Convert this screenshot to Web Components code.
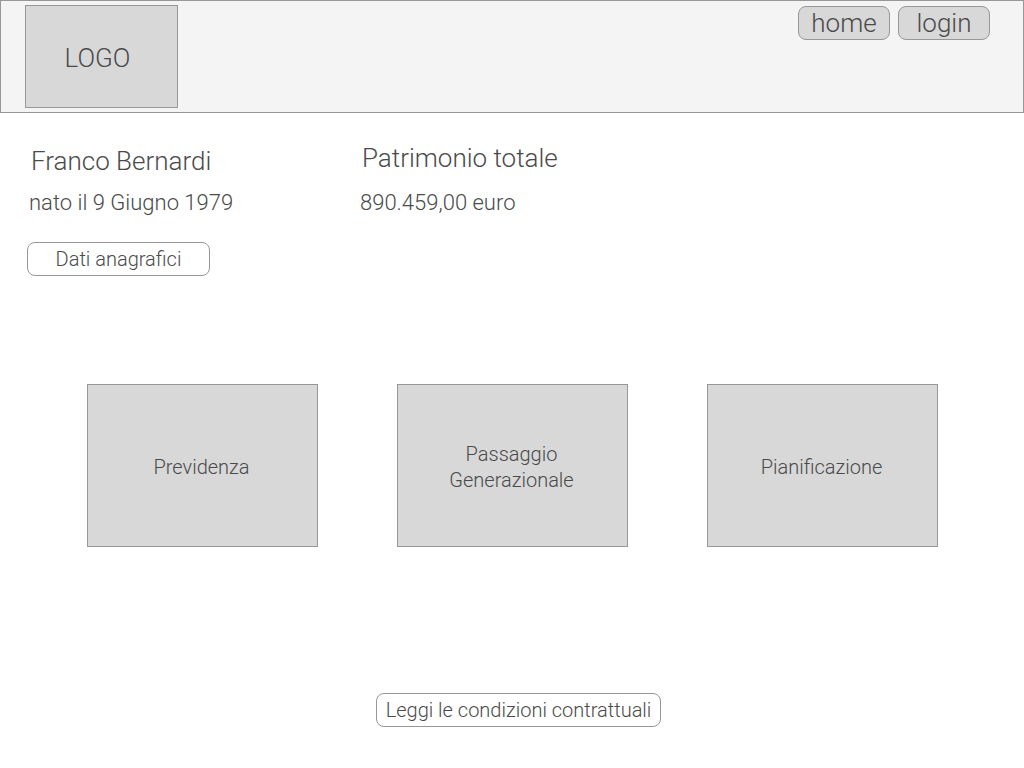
<!DOCTYPE html>
<html lang="it">
<head>
<meta charset="utf-8">
<title>Profilo cliente</title>
<style>
body { margin: 0; background: #fff; color: #4a4a4a; font-family: Roboto, "Liberation Sans", sans-serif; font-weight: 300; }
</style>
</head>
<body>
<client-page></client-page>
<script>
const base = '*, *::before { box-sizing: border-box; } ';

class AppButton extends HTMLElement {
  constructor() {
    super();
    this.attachShadow({ mode: 'open' }).innerHTML = `<style>${base}
      :host { display: block; }
      button { display: block; width: 100%; height: 34px; padding: 0 9px; border: 1px solid #979797; border-radius: 8px; background: #fff; color: inherit; font: inherit; font-size: 20px; line-height: 32px; white-space: nowrap; text-align: center; cursor: pointer; }
      :host([filled]) button { background: #d8d8d8; font-size: 26px; }
      </style><button type="button"><slot></slot></button>`;
  }
}
customElements.define('app-button', AppButton);

class LogoBox extends HTMLElement {
  constructor() {
    super();
    this.attachShadow({ mode: 'open' }).innerHTML = `<style>${base}
      :host { display: flex; box-sizing: border-box; width: 153px; height: 103px; padding: 2px 8px 0 0; align-items: center; justify-content: center; border: 1px solid #979797; background: #d8d8d8; font-size: 26px; line-height: 30px; }
      </style><slot></slot>`;
  }
}
customElements.define('logo-box', LogoBox);

class SiteHeader extends HTMLElement {
  constructor() {
    super();
    this.attachShadow({ mode: 'open' }).innerHTML = `<style>${base}
      :host { display: block; }
      header { display: flex; justify-content: space-between; align-items: flex-start; padding: 4px 33px 4px 24px; border: 1px solid #979797; background: #f4f4f4; }
      nav { display: flex; gap: 8px; padding-top: 1px; }
      app-button { width: 92px; }
      </style><header><logo-box>LOGO</logo-box><nav><app-button filled>home</app-button><app-button filled>login</app-button></nav></header>`;
  }
}
customElements.define('site-header', SiteHeader);

class InfoBlock extends HTMLElement {
  constructor() {
    super();
    this.attachShadow({ mode: 'open' }).innerHTML = `<style>${base}
      :host { display: block; }
      h2 { margin: 0 0 var(--title-gap, 14px); padding-left: 2px; font-size: 26px; line-height: 30px; font-weight: 300; }
      p { margin: 0; font-size: 22px; line-height: 26px; }
      </style><h2><slot name="title"></slot></h2><p><slot></slot></p>`;
  }
}
customElements.define('info-block', InfoBlock);

class AreaCard extends HTMLElement {
  constructor() {
    super();
    this.attachShadow({ mode: 'open' }).innerHTML = `<style>${base}
      :host { display: block; }
      button { display: grid; place-items: center; width: 100%; height: 163px; margin: 0; padding: 2px 42px 0 40px; border: 1px solid #979797; background: #d8d8d8; color: inherit; font: inherit; font-size: 20px; line-height: 26px; text-align: center; cursor: pointer; }
      </style><button type="button"><span><slot></slot></span></button>`;
  }
}
customElements.define('area-card', AreaCard);

class ClientPage extends HTMLElement {
  constructor() {
    super();
    this.attachShadow({ mode: 'open' }).innerHTML = `<style>${base}
      :host { display: block; }
      .summary { display: flex; align-items: flex-end; padding: 30px 29px 0; }
      .person { flex: 0 0 331px; }
      .wealth { --title-gap: 17px; }
      .data { width: 183px; margin: 26px 0 0 27px; }
      .cards { display: grid; grid-template-columns: repeat(3, 1fr); gap: 79px; padding: 0 86px 0 87px; margin-top: 108px; }
      .terms { display: flex; justify-content: center; margin-top: 146px; padding: 0 0 40px 13px; }
      </style>
      <site-header></site-header>
      <main>
        <section class="summary">
          <info-block class="person"><span slot="title">Franco Bernardi</span>nato il 9 Giugno 1979</info-block>
          <info-block class="wealth"><span slot="title">Patrimonio totale</span>890.459,00 euro</info-block>
        </section>
        <app-button class="data">Dati anagrafici</app-button>
        <section class="cards">
          <area-card>Previdenza</area-card><area-card>Passaggio Generazionale</area-card><area-card>Pianificazione</area-card>
        </section>
        <div class="terms"><app-button>Leggi le condizioni contrattuali</app-button></div>
      </main>`;
  }
}
customElements.define('client-page', ClientPage);
</script>
</body>
</html>
